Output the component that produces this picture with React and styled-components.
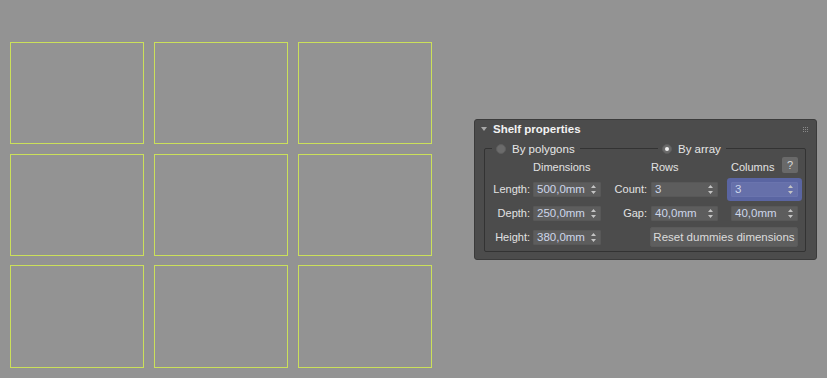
import React from 'react';
import styled, { createGlobalStyle } from 'styled-components';

const Global = createGlobalStyle`
    body {
        margin: 0;
        background: #939393;
        font-family: "Liberation Sans", Arial, sans-serif;
    }
`;

const Page = styled.div`
    display: flex;
    align-items: flex-start;
    width: 827px;
    height: 378px;
    overflow: hidden;
`;

const Dummies = styled.div`
    display: grid;
    grid-template-columns: repeat(3, 134px);
    grid-template-rows: repeat(3, 102px);
    column-gap: 10px;
    row-gap: 10px;
    margin: 42px 0 0 10px;
`;

const Dummy = styled.div`
    box-sizing: border-box;
    border: 1px solid #cbe05a;
    margin-top: ${p => (p.$shift ? '-1px' : '0')};
`;

const Panel = styled.div`
    box-sizing: border-box;
    width: 343px;
    height: 141px;
    margin: 119px 0 0 42px;
    background: #4c4c4c;
    border: 1px solid #3b3b3b;
    border-radius: 3px;
    display: flex;
    flex-direction: column;
`;

const Header = styled.div`
    height: 21px;
    box-sizing: border-box;
    padding: 0 8px 3px 6px;
    display: flex;
    align-items: center;
    color: #f2f2f2;
    font-weight: bold;
    font-size: 11.5px;
`;

const Arrow = styled.span`
    width: 0;
    height: 0;
    border-left: 3px solid transparent;
    border-right: 3px solid transparent;
    border-top: 4px solid #a8a8a8;
    margin-right: 6px;
`;

const Grip = styled.div`
    margin-left: auto;
    display: grid;
    grid-template-columns: repeat(3, 1px);
    gap: 1px;
    span {
        width: 1px;
        height: 1px;
        background: #8a8a8a;
    }
`;

const Group = styled.div`
    position: relative;
    margin: 7px 10px 0 9px;
    border: 1px solid #333;
    border-radius: 2px;
    padding: 8px 0 6px 0;
    display: grid;
    grid-template-columns: 48px 68px 50px 67px 80px;
    grid-auto-rows: 16px;
    row-gap: 8px;
    align-items: center;
    font-size: 11px;
    color: #e2e2e2;
`;

const RadioLabel = styled.label`
    position: absolute;
    top: -8px;
    left: ${p => p.$left}px;
    height: 16px;
    display: flex;
    align-items: center;
    gap: 6px;
    padding: 0 5px 0 4px;
    background: #4c4c4c;
    color: #e6e6e6;
    font-size: 11.5px;
`;

const Dot = styled.span`
    box-sizing: border-box;
    width: 10px;
    height: 10px;
    border-radius: 50%;
    background: #6b6b6b;
    border: 1px solid #5e5e5e;
    display: flex;
    align-items: center;
    justify-content: center;
    &::after {
        content: '';
        width: 4px;
        height: 4px;
        border-radius: 50%;
        background: ${p => (p.$on ? '#f0f0f0' : 'transparent')};
    }
`;

const Label = styled.div`
    text-align: right;
    padding-right: ${p => p.$pad || 3}px;
    white-space: nowrap;
`;

const ColTitle = styled.div`
    grid-column: ${p => p.$col};
    padding-left: ${p => p.$pad || 0}px;
    display: flex;
    align-items: center;
    white-space: nowrap;
`;

const Caption = styled.span`
    margin-top: 4px;
`;

const Help = styled.div`
    margin-left: auto;
    width: 16px;
    height: 16px;
    border-radius: 2px;
    background: #696969;
    color: #d8d8d8;
    display: flex;
    align-items: center;
    justify-content: center;
    font-size: 11px;
`;

const Spin = styled.div`
    box-sizing: border-box;
    width: ${p => p.$w}px;
    height: 15px;
    justify-self: ${p => (p.$end ? 'end' : 'start')};
    background: ${p => (p.$focus ? '#6670aa' : '#5d5d5d')};
    border: 1px solid ${p => (p.$focus ? '#6a74ae' : '#585858')};
    border-radius: 1px;
    box-shadow: ${p => (p.$focus ? '0 0 0 4px #5a65a2' : 'none')};
    display: flex;
    align-items: center;
    padding: 0 4px 0 3px;
    color: #cdd6ea;
    font-size: 11.5px;
`;

const Arrows = styled.svg`
    margin-left: auto;
    flex: none;
`;

const Reset = styled.button`
    grid-column: 4 / 6;
    justify-self: end;
    width: 148px;
    height: 20px;
    border: 1px solid #5a5a5a;
    border-radius: 2px;
    background: #5e5e5e;
    color: #dcdcdc;
    font-family: "Liberation Sans", Arial, sans-serif;
    font-size: 11.5px;
    padding: 0;
`;

const Spinner = ({ value, w = 68, end, focus }) => (
    <Spin $w={w} $end={end} $focus={focus}>
        {value}
        <Arrows width="5" height="9" viewBox="0 0 5 9">
            <path d="M2.5 0 L5 3 L0 3 Z M0 6 L5 6 L2.5 9 Z" fill="#c4c4c4" />
        </Arrows>
    </Spin>
);

const rows = [
    { label: 'Length:', dim: '500,0mm', sub: 'Count:', rows: '3', cols: '3', focus: true },
    { label: 'Depth:', dim: '250,0mm', sub: 'Gap:', rows: '40,0mm', cols: '40,0mm' },
];

const App = () => (
    <Page>
        <Global />
        <Dummies>
            {Array.from({ length: 9 }).map((_, i) => (
                <Dummy key={i} $shift={i > 5} />
            ))}
        </Dummies>

        <Panel>
            <Header>
                <Arrow />
                Shelf properties
                <Grip>
                    {Array.from({ length: 9 }).map((_, i) => <span key={i} />)}
                </Grip>
            </Header>

            <Group>
                <RadioLabel $left={7}><Dot />By polygons</RadioLabel>
                <RadioLabel $left={173}><Dot $on />By array</RadioLabel>

                <ColTitle $col="2"><Caption>Dimensions</Caption></ColTitle>
                <ColTitle $col="4"><Caption>Rows</Caption></ColTitle>
                <ColTitle $col="5" $pad={13}><Caption>Columns</Caption><Help>?</Help></ColTitle>

                {rows.map(r => (
                    <React.Fragment key={r.label}>
                        <Label>{r.label}</Label>
                        <Spinner value={r.dim} />
                        <Label $pad={4}>{r.sub}</Label>
                        <Spinner value={r.rows} w={67} />
                        <Spinner value={r.cols} w={67} end focus={r.focus} />
                    </React.Fragment>
                ))}

                <Label>Height:</Label>
                <Spinner value="380,0mm" />
                <Reset>Reset dummies dimensions</Reset>
            </Group>
        </Panel>
    </Page>
);

export default App;
